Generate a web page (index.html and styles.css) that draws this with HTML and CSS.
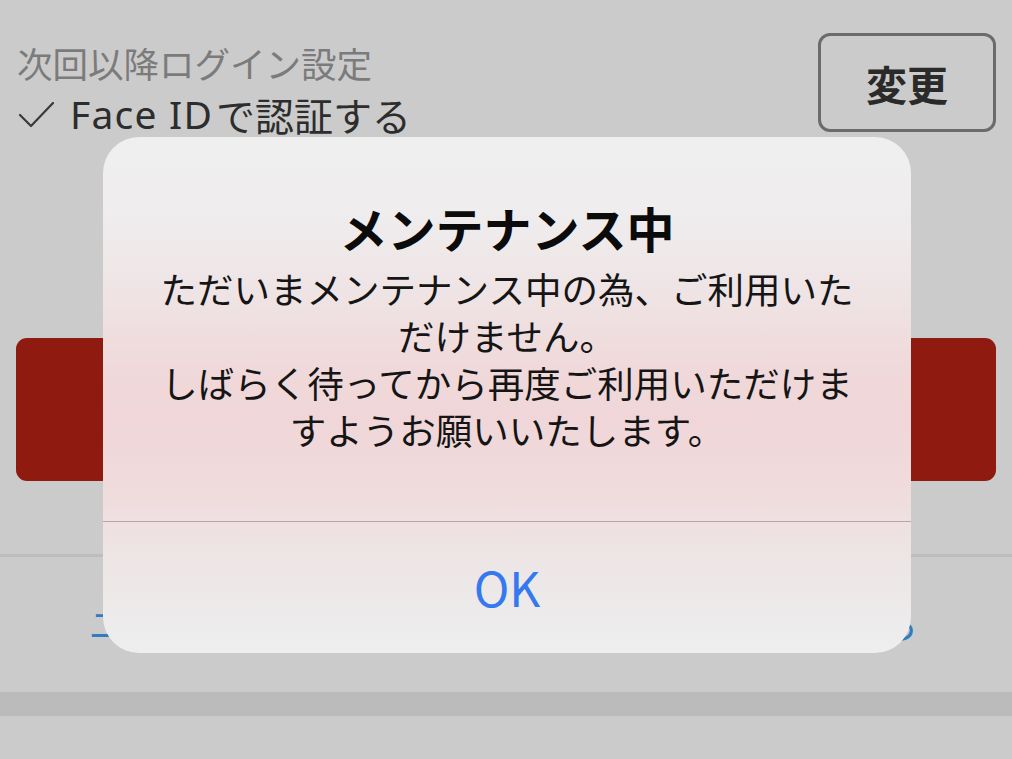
FILE: index.html
```html
<!DOCTYPE html>
<html lang="ja">
<head>
<meta charset="utf-8">
<title>メンテナンス中</title>
<link rel="stylesheet" href="styles.css">
</head>
<body>
<div class="page">
  <div class="settings">
    <div class="settings-text">
      <div class="settings-label">次回以降ログイン設定</div>
      <div class="settings-value"><svg class="check" width="36" height="26" viewBox="0 0 36 26" aria-hidden="true"><polyline points="2,13 13,24 35,1" fill="none" stroke="#3a3a3a" stroke-width="2.2" stroke-linecap="round" stroke-linejoin="round"/></svg><span class="latin">Face ID</span>で認証する</div>
    </div>
    <button class="change-btn">変更</button>
  </div>
  <button class="login-btn" aria-label="ログイン"></button>
  <div class="rule"></div>
  <div class="links">
    <a class="link">ユーザー登録</a>
    <a class="link">お困りの方はこちら</a>
  </div>
  <div class="band"></div>
</div>

<div class="alert">
  <div class="alert-body">
    <div class="alert-title">メンテナンス中</div>
    <div class="alert-message">ただいまメンテナンス中の為、ご利用いただけません。<br>しばらく待ってから再度ご利用いただけますようお願いいたします。</div>
  </div>
  <div class="alert-divider"></div>
  <div class="alert-action">OK</div>
</div>
</body>
</html>
```

FILE: styles.css
```css
html, body {
  margin: 0;
  padding: 0;
}
body {
  width: 1012px;
  height: 759px;
  overflow: hidden;
  background: #cbcbcb;
  font-family: "Noto Sans CJK JP", "Noto Sans", sans-serif;
  position: relative;
}
.page {
  display: flex;
  flex-direction: column;
}
.settings {
  display: flex;
  justify-content: space-between;
  align-items: flex-start;
  padding: 33px 16px 0 17px;
}
.settings-text {
  padding-top: 5px;
}
.settings-label {
  font-size: 35.5px;
  line-height: 50px;
  color: #7b7b7b;
}
.settings-value {
  display: flex;
  align-items: center;
  font-size: 39px;
  line-height: 52px;
  color: #2d2d2d;
}
.check {
  display: block;
  margin: 2px 16px 0 1px;
}
.latin {
  font-family: "Noto Sans", "Open Sans", sans-serif;
  font-size: 39px;
  letter-spacing: 1.2px;
  margin-right: 3px;
}
.change-btn {
  width: 178px;
  height: 99px;
  box-sizing: border-box;
  border: 3px solid #6b6b6b;
  border-radius: 12px;
  background: transparent;
  font-family: "Noto Sans CJK JP", sans-serif;
  font-size: 41px;
  font-weight: 700;
  color: #2a2a2a;
  padding: 0;
}
.login-btn {
  margin: 198px 16px 0 16px;
  height: 143px;
  border: none;
  border-radius: 11px;
  background: #8e1a10;
}
.rule {
  margin-top: 73px;
  height: 3px;
  background: #bdbdbd;
}
.links {
  display: flex;
  justify-content: space-between;
  padding: 46px 94px 0 89px;
  height: 93px;
  box-sizing: border-box;
}
.link {
  font-size: 36px;
  line-height: 40px;
  color: #2f7cc0;
  white-space: nowrap;
}
.band {
  margin-top: 42px;
  height: 24px;
  background: #bbbbbb;
}

.alert {
  position: absolute;
  left: 103px;
  top: 137px;
  width: 808px;
  height: 516px;
  border-radius: 36px;
  overflow: hidden;
  display: flex;
  flex-direction: column;
  background: linear-gradient(to bottom,
    #f0eff0 0px,
    #efedee 70px,
    #efe9ea 110px,
    #efe2e3 170px,
    #f0d9da 230px,
    #f0d6d8 280px,
    #f0dadb 340px,
    #efe0e1 384px,
    #ede5e5 420px,
    #edebeb 480px,
    #eeeeee 516px);
}
.alert-body {
  height: 384px;
  box-sizing: border-box;
  padding: 60px 40px 0 40px;
  text-align: center;
}
.alert-title {
  font-size: 48px;
  font-weight: 700;
  line-height: 60px;
  color: #0b0b0b;
}
.alert-message {
  margin-top: 8px;
  font-size: 36.5px;
  line-height: 47px;
  color: #151515;
}
.alert-divider {
  height: 1px;
  background: #b9a4a5;
}
.alert-action {
  flex: 1;
  display: flex;
  align-items: center;
  justify-content: center;
  font-family: "Noto Sans CJK JP", sans-serif;
  font-size: 48px;
  color: #3479f0;
  padding-bottom: 4px;
}
```
